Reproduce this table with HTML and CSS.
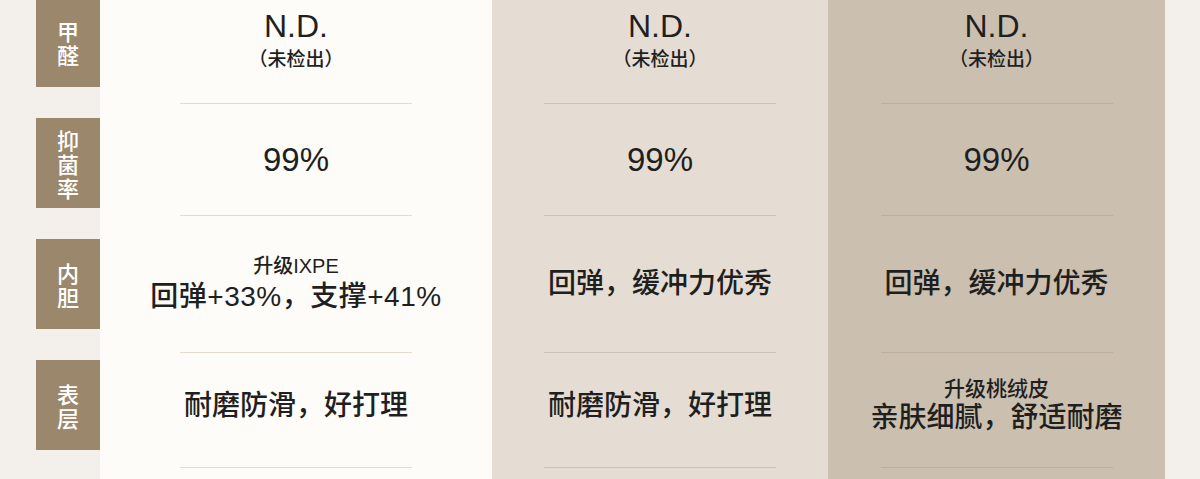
FILE: index.html
```html
<!DOCTYPE html>
<html lang="zh-CN">
<head>
<meta charset="utf-8">
<title>对比</title>
<link rel="stylesheet" href="styles.css">
</head>
<body>
<div class="page">
  <div class="labels">
    <div class="label"><span class="ch">甲</span><span class="ch">醛</span></div>
    <div class="label"><span class="ch">抑</span><span class="ch">菌</span><span class="ch">率</span></div>
    <div class="label"><span class="ch">内</span><span class="ch">胆</span></div>
    <div class="label"><span class="ch">表</span><span class="ch">层</span></div>
  </div>

  <div class="col col-a">
    <div class="cell r1"><div class="big">N.D.</div><div class="note">（未检出）</div></div>
    <div class="rule"></div>
    <div class="cell r2"><div class="pct">99%</div></div>
    <div class="rule"></div>
    <div class="cell r3"><div class="sub">升级IXPE</div><div class="main main-wide">回弹+33%，支撑+41%</div></div>
    <div class="rule"></div>
    <div class="cell r4"><div class="main">耐磨防滑，好打理</div></div>
    <div class="rule"></div>
  </div>

  <div class="col col-b">
    <div class="cell r1"><div class="big">N.D.</div><div class="note">（未检出）</div></div>
    <div class="rule"></div>
    <div class="cell r2"><div class="pct">99%</div></div>
    <div class="rule"></div>
    <div class="cell r3"><div class="main">回弹，缓冲力优秀</div></div>
    <div class="rule"></div>
    <div class="cell r4"><div class="main">耐磨防滑，好打理</div></div>
    <div class="rule"></div>
  </div>

  <div class="col col-c">
    <div class="cell r1"><div class="big">N.D.</div><div class="note">（未检出）</div></div>
    <div class="rule"></div>
    <div class="cell r2"><div class="pct">99%</div></div>
    <div class="rule"></div>
    <div class="cell r3"><div class="main">回弹，缓冲力优秀</div></div>
    <div class="rule"></div>
    <div class="cell r4"><div class="sub sub-c">升级桃绒皮</div><div class="main">亲肤细腻，舒适耐磨</div></div>
    <div class="rule"></div>
  </div>
</div>
</body>
</html>
```

FILE: styles.css
```css
html, body {
  margin: 0;
  padding: 0;
}

body {
  background: #f3f0eb;
  font-family: "Liberation Sans", "Noto Sans CJK SC", sans-serif;
  color: #1f1f1f;
}

.page {
  width: 1200px;
  height: 479px;
  overflow: hidden;
  display: flex;
  padding-left: 36px;
  box-sizing: border-box;
  background: #f3f0eb;
}

.labels {
  width: 64px;
  flex: none;
  display: flex;
  flex-direction: column;
  gap: 31px;
  margin-top: -3px;
}

.label {
  height: 90px;
  background: #9b876b;
  color: #ffffff;
  font-family: "Noto Sans CJK SC", sans-serif;
  font-weight: 500;
  display: flex;
  flex-direction: column;
  align-items: center;
  justify-content: center;
}

.ch {
  display: block;
  font-size: 22px;
  line-height: 24px;
  height: 24px;
  overflow: visible;
}

.col {
  flex: none;
  display: flex;
  flex-direction: column;
}

.col-a { width: 392px; background: #fdfcf9; }
.col-b { width: 336px; background: #e5ddd3; }
.col-c { width: 337px; background: #cbbfaf; }

.col-a .rule { background: #e3dad0; }
.col-b .rule { background: #cdc2b5; }
.col-c .rule { background: #bcae9b; }

.rule {
  width: 232px;
  height: 1px;
  margin: 0 auto;
  flex: none;
}

.cell {
  display: flex;
  flex-direction: column;
  align-items: center;
  justify-content: center;
  text-align: center;
  flex: none;
  font-weight: 500;
}

.r1 { height: 103px; justify-content: flex-start; padding-top: 8px; box-sizing: border-box; }
.r2 { height: 111px; }
.r3 { height: 136px; }
.r4 { height: 114px; padding-bottom: 8px; box-sizing: border-box; }

.big {
  font-size: 32px;
  line-height: 36px;
  font-weight: 400;
}

.note {
  font-family: "Noto Sans CJK SC", sans-serif;
  font-size: 19px;
  line-height: 22px;
  margin-top: 3px;
}

.pct {
  font-size: 33px;
  line-height: 36px;
  font-weight: 400;
}

.sub {
  font-size: 20px;
  line-height: 24px;
}

.sub-c {
  font-size: 21px;
}

.main {
  font-size: 28px;
  line-height: 34px;
}

.main-wide {
  letter-spacing: 0.5px;
  margin-top: 2px;
}
```
